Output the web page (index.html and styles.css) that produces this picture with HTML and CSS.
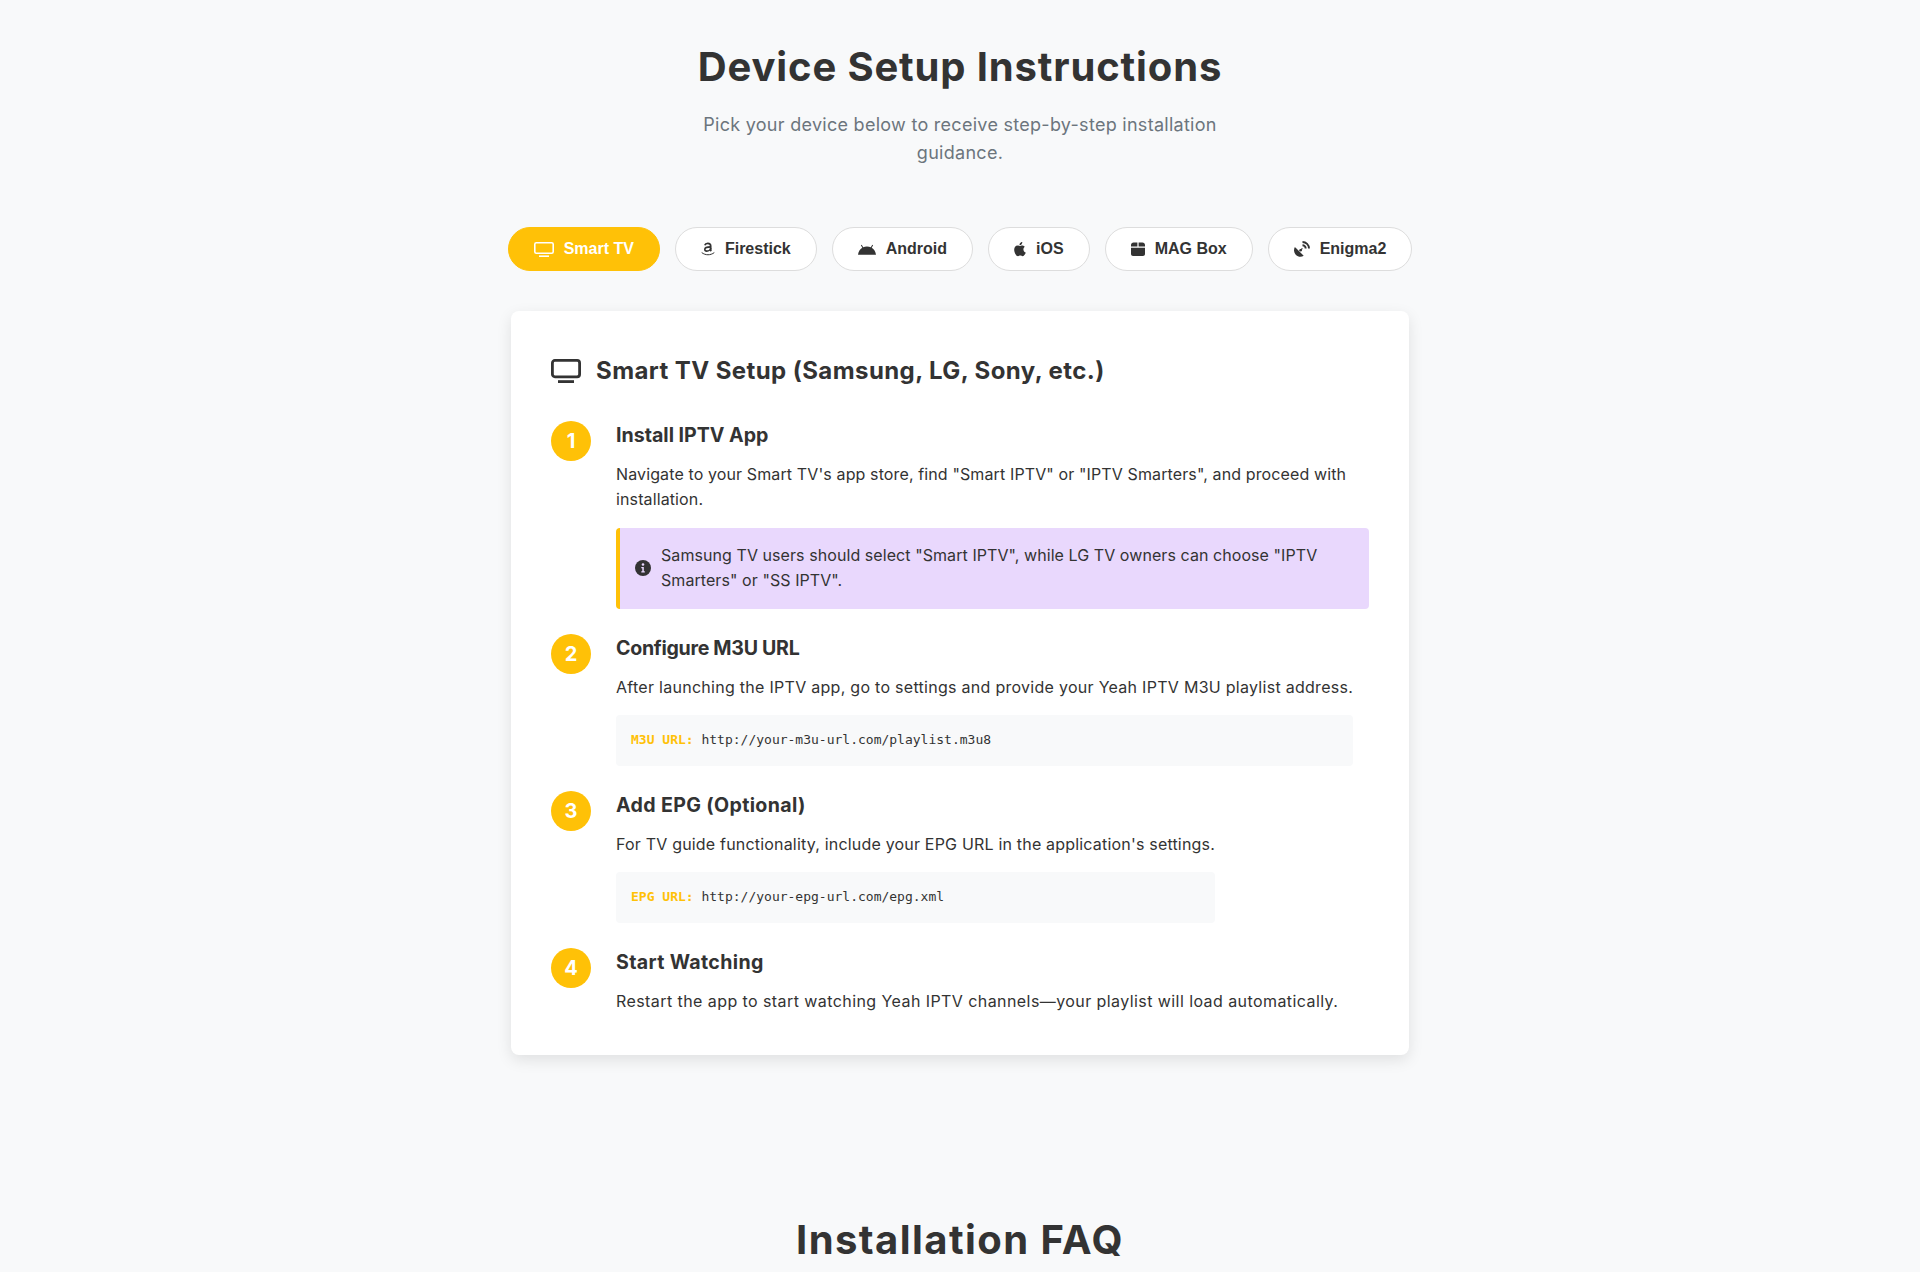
FILE: index.html
```html
<!DOCTYPE html>
<html lang="en">
<head>
    <meta charset="UTF-8">
    <meta name="viewport" content="width=device-width, initial-scale=1.0">
    <title>Device Setup Instructions</title>
    <link rel="stylesheet" href="styles.css">
</head>
<body>

<section class="setup">
    <header class="intro">
        <h1>Device Setup Instructions</h1>
        <p>Pick your device below to receive step-by-step installation guidance.</p>
    </header>

    <!-- Device tabs -->
    <div class="tabs">
        <button class="tab active">
            <svg class="icon-tv" viewBox="0 0 20 15" fill="none" stroke="currentColor" stroke-width="1.6"><rect x="0.8" y="0.8" width="18.400" height="10.400" rx="1.500"/><path d="M5 14.200h10"/></svg>
            Smart TV
        </button>
        <button class="tab">
            <svg class="icon-amazon" viewBox="0 0 14 14" fill="none" stroke="currentColor"><path d="M3.800 3.200c.4-1.300 1.600-1.900 3-1.900 1.900 0 2.900 1 2.900 2.700v3.900c0 .5.200.8.600 1.200" stroke-width="1.700"/><path d="M9.700 4.900c-3 0-5.900.5-5.900 2.400 0 1.200.8 1.800 1.900 1.800 2 0 4-1.300 4-3.200" stroke-width="1.600"/><path d="M1 10.800c3.500 2.700 8.500 2.700 12 0" stroke-width="1" stroke-linecap="round"/></svg>
            Firestick
        </button>
        <button class="tab">
            <svg class="icon-android" viewBox="0 0 18 11" fill="currentColor"><path d="M0 10.800C.4 7.600 2 5.100 4.300 3.700L2.900 1.200l.8-.5 1.500 2.500A9.500 9.500 0 0 1 9 2.500c1.400 0 2.700.3 3.800.7L14.300.7l.8.5-1.400 2.500c2.300 1.400 3.900 3.900 4.300 7.100z"/></svg>
            Android
        </button>
        <button class="tab">
            <svg class="icon-apple" viewBox="6 3.500 14 16" fill="currentColor"><path d="M16.400 11.900c0-1.700 1.300-2.500 1.400-2.600-.8-1.100-2-1.300-2.400-1.300-1-.1-2 .6-2.500.6s-1.300-.6-2.200-.6C9.500 8 8.400 8.700 7.800 9.700c-1.300 2.200-.3 5.400.9 7.200.6.900 1.300 1.800 2.300 1.800.9 0 1.200-.6 2.300-.6s1.400.6 2.300.6 1.600-.9 2.200-1.700c.7-1 1-1.900 1-2-.1 0-2.400-.9-2.400-3.100zM14.600 6.800c.5-.6.800-1.400.7-2.300-.7 0-1.600.5-2.100 1.100-.4.500-.8 1.300-.7 2.100.8.100 1.600-.4 2.100-.9z"/></svg>
            iOS
        </button>
        <button class="tab">
            <svg class="icon-mag" viewBox="0 0 14 14" fill="currentColor"><path d="M2.500 0.500h3.900v4H0V3C0 1.600 1.100.500 2.500.500zM7.600.500h3.900C12.900.500 14 1.600 14 3v1.500H7.600zM0 5.700h14V12c0 1.100-.9 2-2 2H2c-1.100 0-2-.9-2-2z"/></svg>
            MAG Box
        </button>
        <button class="tab">
            <svg class="icon-enigma" viewBox="0 0 16 16" fill="currentColor"><path d="M.9 6l8.800 8.800C7.200 16.400 4 16 2 14S-.600 8.700.900 6z"/><circle cx="6.600" cy="9.200" r="1.300"/><path d="M6.600 9.200l1.800-1.800" stroke="currentColor" stroke-width="1.200"/><path d="M8.500 4.300a3.200 3.200 0 0 1 3.200 3.200M8.500 1a6.500 6.500 0 0 1 6.500 6.500" fill="none" stroke="currentColor" stroke-width="1.900"/></svg>
            Enigma2
        </button>
    </div>

    <!-- Instructions -->
    <div class="card">
        <h2>
            <svg class="card-icon" viewBox="0 0 30 24" fill="none" stroke="currentColor" stroke-width="2.800"><rect x="1.400" y="1.400" width="27.200" height="16.400" rx="2.500"/><path d="M7 22.600h16"/></svg>
            Smart TV Setup (Samsung, LG, Sony, etc.)
        </h2>

        <div class="step">
            <div class="num">1</div>
            <div class="step-body">
                <h3>Install IPTV App</h3>
                <p class="narrow">Navigate to your Smart TV's app store, find "Smart IPTV" or "IPTV Smarters", and proceed with installation.</p>
                <div class="note">
                    <svg class="note-icon" viewBox="0 0 16 16"><circle cx="8" cy="8" r="8" fill="#333"/><circle cx="8" cy="4.500" r="1.300" fill="#e9d8fd"/><path d="M6.300 7h2.500v4.300h1v1.200H6.300v-1.200h1V8.200h-1z" fill="#e9d8fd"/></svg>
                    <span>Samsung TV users should select "Smart IPTV", while LG TV owners can choose "IPTV Smarters" or "SS IPTV".</span>
                </div>
            </div>
        </div>

        <div class="step">
            <div class="num">2</div>
            <div class="step-body">
                <h3 class="tight">Configure M3U URL</h3>
                <p>After launching the IPTV app, go to settings and provide your Yeah IPTV M3U playlist address.</p>
                <div class="code"><b>M3U URL:</b> http://your-m3u-url.com/playlist.m3u8</div>
            </div>
        </div>

        <div class="step">
            <div class="num">3</div>
            <div class="step-body">
                <h3 class="loose">Add EPG (Optional)</h3>
                <p class="medium">For TV guide functionality, include your EPG URL in the application's settings.</p>
                <div class="code"><b>EPG URL:</b> http://your-epg-url.com/epg.xml</div>
            </div>
        </div>

        <div class="step">
            <div class="num">4</div>
            <div class="step-body">
                <h3 class="loose">Start Watching</h3>
                <p class="wide">Restart the app to start watching Yeah IPTV channels—your playlist will load automatically.</p>
            </div>
        </div>
    </div>
</section>

<section class="faq">
    <h2 class="faq-title">Installation FAQ</h2>
</section>

</body>
</html>
```

FILE: styles.css
```css
* {
    box-sizing: border-box;
}
html, body {
    height: 1272px;
    overflow: hidden;
}
body {
    margin: 0;
    background: #f8f9fa;
    color: #333;
    font-family: Inter, "Open Sans", sans-serif;
}
.setup {
    padding: 41px 0 80px;
}
.intro {
    text-align: center;
    margin-bottom: 60px;
}
h1 {
    margin: 0 0 18px;
    font-size: 40px;
    line-height: 52px;
    font-weight: 700;
    letter-spacing: 0.85px;
}
.intro p {
    width: 560px;
    margin: 0 auto;
    font-size: 18px;
    line-height: 28px;
    letter-spacing: 0.28px;
    color: #6c757d;
}
.tabs {
    display: flex;
    justify-content: center;
    gap: 15px;
    margin-bottom: 40px;
}
.tab {
    display: flex;
    align-items: center;
    gap: 10px;
    height: 44px;
    padding: 0 25px;
    border: 1px solid #ddd;
    border-radius: 30px;
    background: #fff;
    color: #333;
    font-family: "Liberation Sans", Arial, sans-serif;
    font-size: 16px;
    font-weight: 700;
}
.tab.active {
    background: #ffc107;
    border-color: #ffc107;
    color: #fff;
}
.icon-tv {
    width: 20px;
    height: 15px;
}
.icon-amazon {
    width: 14px;
    height: 14px;
}
.icon-android {
    width: 18px;
    height: 11px;
}
.icon-apple {
    width: 14px;
    height: 16px;
    margin: 0 -1px;
}
.icon-mag {
    width: 14px;
    height: 14px;
}
.icon-enigma {
    width: 16px;
    height: 16px;
}
.card {
    width: 898px;
    margin: 0 auto;
    padding: 40px 40px 41px;
    background: #fff;
    border-radius: 8px;
    box-shadow: 0 5px 15px rgba(0, 0, 0, 0.1);
}
.card h2 {
    display: flex;
    align-items: center;
    gap: 15px;
    margin: 0 0 30px;
    font-size: 24px;
    line-height: 40px;
    font-weight: 700;
    letter-spacing: 0.42px;
}
.card-icon {
    width: 30px;
    height: 24px;
}
.step {
    display: flex;
    gap: 25px;
    margin-bottom: 25px;
}
.step:last-child {
    margin-bottom: 0;
}
.num {
    flex: none;
    width: 40px;
    height: 40px;
    border-radius: 50%;
    background: #ffc107;
    color: #fff;
    font-size: 20px;
    font-weight: 700;
    line-height: 40px;
    text-align: center;
}
.step-body h3 {
    margin: 0 0 12px;
    font-size: 19.600px;
    line-height: 28.800px;
    font-weight: 700;
}
.step-body h3.tight {
    letter-spacing: -0.3px;
}
.step-body h3.loose {
    letter-spacing: 0.35px;
}
.step-body p {
    margin: 0;
    font-size: 16px;
    line-height: 25.600px;
    letter-spacing: 0.28px;
}
.step-body p.narrow {
    letter-spacing: 0.12px;
}
.step-body p.medium {
    letter-spacing: 0.19px;
}
.step-body p.wide {
    letter-spacing: 0.425px;
}
.note {
    display: flex;
    align-items: center;
    gap: 10px;
    margin-top: 15px;
    padding: 15px 15px 16.200px;
    background: #e9d8fd;
    border-left: 4px solid #ffc107;
    border-radius: 4px;
    font-size: 16px;
    line-height: 25px;
    letter-spacing: 0.07px;
}
.note-icon {
    flex: none;
    width: 16px;
    height: 16px;
}
.code {
    margin-top: 14.500px;
    padding: 14px 15px 16px;
    background: #f8f9fa;
    border-radius: 4px;
    font-family: "DejaVu Sans Mono", monospace;
    font-size: 13px;
    line-height: 21px;
}
.code b {
    color: #ffc107;
}
.faq {
    padding-top: 79px;
    text-align: center;
}
.faq-title {
    margin: 0;
    font-size: 40px;
    line-height: 52px;
    font-weight: 700;
    letter-spacing: 1.44px;
}
```
